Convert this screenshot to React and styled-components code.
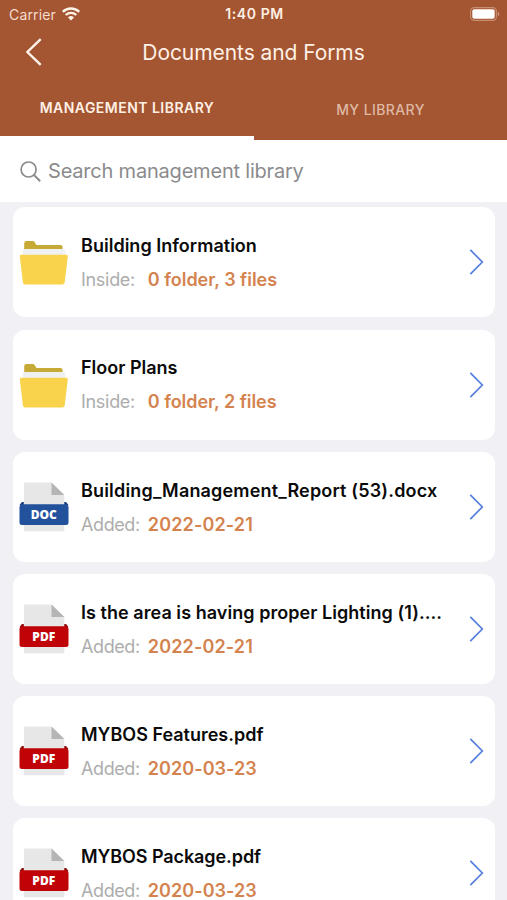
import React from 'react';
import styled, { createGlobalStyle } from 'styled-components';

const GlobalStyle = createGlobalStyle`
  * { box-sizing: border-box; }
  body {
    margin: 0;
    background: #f0f0f5;
    font-family: Inter, "Liberation Sans", sans-serif;
    overflow: hidden;
  }
`;

const Screen = styled.div`
  width: 507px;
  height: 900px;
  overflow: hidden;
  display: flex;
  flex-direction: column;
`;

const Header = styled.header`
  flex: none;
  height: 140px;
  background: #a45531;
  color: #fff0e6;
  display: flex;
  flex-direction: column;
`;

const StatusBar = styled.div`
  height: 27px;
  padding: 0 7px 0 9px;
  display: grid;
  grid-template-columns: 1fr auto 1fr;
  align-items: center;
`;

const Carrier = styled.span`
  display: flex;
  align-items: center;
  gap: 6px;
  font-size: 14px;
  line-height: 25px;
  letter-spacing: 0.15px;
  color: #f6dccf;
`;

const Clock = styled.time`
  font-size: 14px;
  font-weight: 600;
  line-height: 28px;
  letter-spacing: 0.6px;
`;

const BatterySlot = styled.span`
  display: flex;
  justify-content: flex-end;
`;

const NavBar = styled.div`
  height: 50px;
  padding: 0 24px;
  display: grid;
  grid-template-columns: 20px 1fr 20px;
  align-items: center;
`;

const PageTitle = styled.h1`
  margin: 0;
  padding-top: 2px;
  text-align: center;
  font-size: 21px;
  font-weight: 400;
  line-height: 48px;
  letter-spacing: -0.07px;
`;

const Tabs = styled.nav`
  flex: 1;
  display: grid;
  grid-template-columns: 254px 253px;
`;

const Tab = styled.button`
  border: 0;
  padding: ${(p) => (p.$active ? 1 : 2)}px 0 0;
  background: none;
  border-bottom: ${(p) => (p.$active ? '4px solid #fff' : '0')};
  color: ${(p) => (p.$active ? '#fff0e6' : '#dfb9a4')};
  font-family: inherit;
  font-size: 14px;
  font-weight: ${(p) => (p.$active ? 600 : 500)};
  letter-spacing: ${(p) => p.$spacing}px;
`;

const SearchBar = styled.div`
  flex: none;
  height: 62px;
  padding: 0 20px;
  display: flex;
  align-items: center;
  gap: 7px;
  background: #fff;
  color: #8b8b8d;
  font-size: 20px;
  letter-spacing: ${(p) => p.$spacing}px;
`;

const List = styled.main`
  flex: none;
  display: flex;
  flex-direction: column;
  gap: 12.2px;
  padding: 5.4px 12px 0 12.5px;
`;

const Card = styled.article`
  height: 110px;
  flex: none;
  border-radius: 12px;
  background: #fff;
  display: grid;
  grid-template-columns: 50px 1fr 16px;
  column-gap: 12.5px;
  align-items: center;
  padding: 0 10px 0 6px;
`;

const Details = styled.div`
  min-width: 0;
  padding-top: 1.6px;
  white-space: nowrap;
`;

const Name = styled.h2`
  margin: 0;
  font-size: 18px;
  font-weight: 600;
  line-height: 34px;
  color: #0a0a0a;
  letter-spacing: ${(p) => p.$spacing}px;
`;

const Meta = styled.div`
  display: grid;
  grid-template-columns: 66.8px auto;
  line-height: 34px;
  font-size: 18px;
`;

const MetaLabel = styled.span`
  color: #adadad;
  letter-spacing: ${(p) => p.$spacing}px;
`;

const MetaValue = styled.span`
  color: #d4834f;
  font-weight: 600;
  letter-spacing: ${(p) => p.$spacing}px;
`;

const Glyph = styled.svg`
  display: block;
  overflow: visible;
`;

const WifiIcon = () => (
  <Glyph width="18" height="14" viewBox="0 0 18 14" fill="none" stroke="#fff4ec">
    <path d="M.8 4.8a11.7 11.7 0 0 1 16.4 0" strokeWidth="2.4" />
    <path d="M3.7 8a7.6 7.6 0 0 1 10.6 0" strokeWidth="2.2" />
    <path d="M9 13.5 6 10.4a4.3 4.3 0 0 1 6 0Z" fill="#fff4ec" stroke="none" />
  </Glyph>
);

const BatteryIcon = () => (
  <Glyph width="30" height="14" viewBox="0 0 30 14">
    <rect x=".6" y=".6" width="25.8" height="12.8" rx="3.6" fill="none" stroke="#c68e73" strokeWidth="1.1" />
    <rect x="2.3" y="2.3" width="22.4" height="9.4" rx="2" fill="#fff" />
    <path d="M27.8 4.5q3 2.5 0 5Z" fill="#cf9c83" />
  </Glyph>
);

const BackIcon = () => (
  <Glyph width="20" height="28" viewBox="0 0 20 28">
    <path d="M16.7 1.2 3.4 14l13.3 12.8" fill="none" stroke="#fff4ec" strokeWidth="2.4" />
  </Glyph>
);

const SearchIcon = () => (
  <Glyph width="21" height="21" viewBox="0 0 21 21" fill="none" stroke="#8b8b8d" strokeWidth="1.7">
    <circle cx="8.6" cy="8.5" r="7.5" />
    <path d="m14 14 6.2 6.2" strokeWidth="2" />
  </Glyph>
);

const ChevronIcon = () => (
  <Glyph width="16" height="26" viewBox="0 0 16 26">
    <path d="m1.3.9 12 12.1-12 12.1" fill="none" stroke="#567ee0" strokeWidth="1.7" />
  </Glyph>
);

const FolderIcon = () => (
  <Glyph width="50" height="50" viewBox="0 0 50 50">
    <path d="M5.2 13V6.4Q5.2 4 7.4 4h6.2q1.4 0 2.2 1.3l1.6 2.8h24q2.2 0 2.2 2.2V13Z" fill="#c7a936" />
    <path d="M6 12.1h38q2 0 2.2 2V19H3.8v-4.9q.2-2 2.2-2Z" fill="#eff0f0" />
    <path d="M2.2 17.8h45.2q1.6 0 1.4 1.6l-3.1 26.2q-.3 2-2.3 2H6.2q-2 0-2.3-2L.8 19.4q-.2-1.6 1.4-1.6Z" fill="#f9d34b" />
  </Glyph>
);

const BannerText = styled.text`
  font-family: "Open Sans", sans-serif;
  font-size: 12px;
  font-weight: 800;
  fill: #fff;
  text-anchor: middle;
`;

const FileIcon = ({ label, color, fold }) => (
  <Glyph width="50" height="50" viewBox="0 0 50 50">
    <path d="M5 .5h27.5L45.3 13v36.3H5Z" fill="#e7e7e7" />
    <path d="M32.5.5 45.3 13H32.5Z" fill="#b5b5b5" />
    <path d="M4.8 20v3H.5L3 20Zm40.5 0v3h4.2L47 20Z" fill={fold} />
    <path d="M3.5 22.2h43q3 0 3 3v15.3q0 2.5-2.5 2.5H3Q.5 43 .5 40.5V25.2q0-3 3-3Z" fill={color} />
    <BannerText x="24.8" y="37.2">{label}</BannerText>
  </Glyph>
);

const icons = {
  folder: <FolderIcon />,
  doc: <FileIcon label="DOC" color="#23529c" fold="#173a7a" />,
  pdf: <FileIcon label="PDF" color="#c00306" fold="#8d0808" />,
};

const items = [
  { kind: 'folder', name: 'Building Information', label: 'Inside:', value: '0 folder, 3 files', ns: 0.02, ls: -0.3, vs: -0.01 },
  { kind: 'folder', name: 'Floor Plans', label: 'Inside:', value: '0 folder, 2 files', ns: 0, ls: -0.3, vs: -0.03 },
  { kind: 'doc', name: 'Building_Management_Report (53).docx', label: 'Added:', value: '2022-02-21', ns: 0.17, ls: -0.4, vs: 0.14 },
  { kind: 'pdf', name: 'Is the area is having proper Lighting (1)....', label: 'Added:', value: '2022-02-21', ns: 0.05, ls: -0.4, vs: 0.14 },
  { kind: 'pdf', name: 'MYBOS Features.pdf', label: 'Added:', value: '2020-03-23', ns: 0, ls: -0.4, vs: 0.06 },
  { kind: 'pdf', name: 'MYBOS Package.pdf', label: 'Added:', value: '2020-03-23', ns: -0.08, ls: -0.4, vs: 0.06 },
];

export default function App() {
  return (
    <Screen>
      <GlobalStyle />
      <Header>
        <StatusBar>
          <Carrier>Carrier <WifiIcon /></Carrier>
          <Clock>1:40 PM</Clock>
          <BatterySlot><BatteryIcon /></BatterySlot>
        </StatusBar>
        <NavBar>
          <BackIcon />
          <PageTitle>Documents and Forms</PageTitle>
        </NavBar>
        <Tabs>
          <Tab $active $spacing={0.47}>MANAGEMENT LIBRARY</Tab>
          <Tab $spacing={0.4}>MY LIBRARY</Tab>
        </Tabs>
      </Header>
      <SearchBar $spacing={-0.2}><SearchIcon />Search management library</SearchBar>
      <List>
        {items.map((item) => (
          <Card key={item.name}>
            {icons[item.kind]}
            <Details>
              <Name $spacing={item.ns}>{item.name}</Name>
              <Meta>
                <MetaLabel $spacing={item.ls}>{item.label}</MetaLabel>
                <MetaValue $spacing={item.vs}>{item.value}</MetaValue>
              </Meta>
            </Details>
            <ChevronIcon />
          </Card>
        ))}
      </List>
    </Screen>
  );
}
